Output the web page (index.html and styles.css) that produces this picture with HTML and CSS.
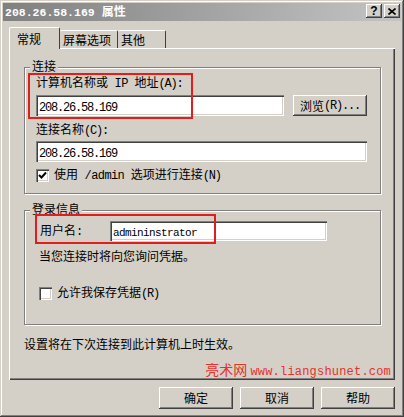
FILE: index.html
```html
<!DOCTYPE html>
<html lang="zh-CN">
<head>
    <meta charset="UTF-8">
    <title>208.26.58.169 属性</title>
    <link rel="stylesheet" href="styles.css">
</head>
<body>
    <div class="window">
        <!-- Barre de titre -->
        <div class="titlebar">
            <span class="title"><span class="en-b">208.26.58.169 </span>属性</span>
            <div class="cap-btns">
                <span class="cap-btn">?</span>
                <span class="cap-btn">
                    <svg width="8" height="7" viewBox="0 0 8 7"><path d="M0.5 0.5 L7.5 6.5 M7.5 0.5 L0.5 6.5" stroke="#000" stroke-width="1.6"/></svg>
                </span>
            </div>
        </div>

        <!-- Onglets -->
        <div class="tabs">
            <div class="tab tab-active">常规</div>
            <div class="tab tab-screen">屏幕选项</div>
            <div class="tab tab-other">其他</div>
        </div>

        <div class="panel">
            <div class="group group-conn">
                <div class="legend">连接</div>
                <div class="label">计算机名称或<span class="en sp"> IP </span>地址<span class="en">(A):</span></div>
                <div class="row">
                    <div class="field field-host"><span class="en">208.26.58.169</span></div>
                    <div class="btn btn-browse">浏览<span class="en">(R)...</span></div>
                </div>
                <div class="label label-name">连接名称<span class="en">(C):</span></div>
                <div class="field field-name"><span class="en">208.26.58.169</span></div>
                <div class="check-row check-admin">
                    <span class="checkbox">
                        <svg width="9" height="9" viewBox="0 0 9 9"><path d="M1 4 L3.5 6.5 L8 1.5" fill="none" stroke="#000" stroke-width="2"/></svg>
                    </span>
                    <span>使用<span class="en sp"> /admin </span>选项进行连接<span class="en">(N)</span></span>
                </div>
            </div>

            <div class="group group-login">
                <div class="legend">登录信息</div>
                <div class="user-row">
                    <span class="user-label">用户名<span class="en">:</span></span>
                    <div class="field field-user"><span class="en en-small">admininstrator</span></div>
                </div>
                <div class="hint">当您连接时将向您询问凭据。</div>
                <div class="check-row check-save">
                    <span class="checkbox"></span>
                    <span>允许我保存凭据<span class="en">(R)</span></span>
                </div>
            </div>

            <div class="note">设置将在下次连接到此计算机上时生效。</div>

            <div class="watermark">亮术网 <span class="wm-url">www.liangshunet.com</span></div>
        </div>

        <!-- Boutons -->
        <div class="actions">
            <div class="btn btn-action">确定</div>
            <div class="btn btn-action">取消</div>
            <div class="btn btn-action">帮助</div>
        </div>

        <!-- Cadres rouges d'annotation -->
        <div class="mark mark-host"></div>
        <div class="mark mark-user"></div>
    </div>
</body>
</html>
```

FILE: styles.css
```css
:root {
    --face: #d4d0c8;
    --shadow: #808080;
    --dark: #404040;
    --light: #ffffff;
    --red: #e01e1e;
}

body {
    margin: 0;
    font-family: "Noto Sans CJK SC", sans-serif;
    font-size: 12px;
    line-height: 14px;
    color: #000;
}

.en {
    font-family: "Liberation Mono", monospace;
    font-size: 12px;
    letter-spacing: -1.2px;
}

.sp {
    white-space: pre;
    letter-spacing: -0.6px;
}

.en-b {
    font-family: "Liberation Mono", monospace;
    font-size: 11.5px;
    font-weight: bold;
    white-space: pre;
}

.en-small {
    font-size: 11px;
    letter-spacing: -0.6px;
}

.window {
    position: relative;
    width: 404px;
    height: 417px;
    box-sizing: border-box;
    padding: 3px;
    background: var(--face);
    box-shadow: inset -1px -1px var(--dark), inset 1px 1px var(--face),
                inset -2px -2px var(--shadow), inset 2px 2px var(--light);
}

/* Barre de titre */
.titlebar {
    height: 18px;
    display: flex;
    align-items: center;
    justify-content: space-between;
    padding: 0 1px 2px 2px;
    box-sizing: border-box;
    background: linear-gradient(to right, #808080, #c4c4c4);
}

.title {
    color: #fff;
    font-weight: bold;
    padding-top: 2px;
}

.cap-btns {
    display: flex;
    gap: 2px;
}

.cap-btn {
    width: 16px;
    height: 14px;
    display: flex;
    align-items: center;
    justify-content: center;
    background: var(--face);
    font-family: "Liberation Sans", sans-serif;
    font-weight: bold;
    font-size: 12px;
    box-shadow: inset -1px -1px var(--dark), inset 1px 1px var(--light),
                inset -2px -2px var(--shadow);
}

/* Onglets */
.tabs {
    display: flex;
    align-items: flex-end;
    height: 22px;
    margin: 6px 0 -1px 6px;
    position: relative;
    z-index: 1;
}

.tab {
    height: 18px;
    margin-bottom: 1px;
    box-sizing: border-box;
    padding: 2px 0 0 3px;
    background: var(--face);
    border-top: 1px solid var(--light);
    border-left: 1px solid var(--light);
    border-right: 1px solid var(--dark);
    border-radius: 2px 2px 0 0;
}

.tab-active {
    width: 51px;
    height: 22px;
    margin-bottom: 0;
    padding: 4px 0 0 7px;
}

.tab-screen {
    width: 58px;
    border-left: none;
}

.tab-other {
    width: 48px;
    border-left: none;
}

/* Panneau */
.panel {
    position: relative;
    width: 386px;
    height: 332px;
    margin-left: 6px;
    box-sizing: border-box;
    padding: 19px 0 0 15px;
    box-shadow: inset 1px 1px var(--light), inset -1px -1px var(--dark),
                inset -2px -2px var(--shadow);
}

.group {
    position: relative;
    width: 357px;
    box-sizing: border-box;
    border: 1px solid var(--shadow);
    box-shadow: inset 1px 1px var(--light), 1px 1px var(--light);
}

.legend {
    position: absolute;
    top: -9px;
    left: 5px;
    padding: 0 2px;
    background: var(--face);
}

.group-conn {
    padding: 7px 0 11px 11px;
}

.group-login {
    margin-top: 16px;
    padding: 10px 0 24px 14px;
}

.row {
    display: flex;
    gap: 9px;
    margin-top: 4px;
}

.label-name {
    margin-top: 6px;
}

.field {
    height: 21px;
    box-sizing: border-box;
    padding: 4px 0 0 3px;
    background: #fff;
    box-shadow: inset 1px 1px var(--shadow), inset 2px 2px var(--dark),
                inset -1px -1px var(--light), inset -2px -2px var(--face);
}

.field-host {
    width: 248px;
}

.field-name {
    width: 331px;
    margin-top: 3px;
}

.btn {
    display: flex;
    align-items: center;
    justify-content: center;
    box-sizing: border-box;
    background: var(--face);
    box-shadow: inset -1px -1px var(--dark), inset 1px 1px var(--light),
                inset -2px -2px var(--shadow);
}

.btn-browse {
    width: 74px;
    height: 21px;
}

.check-row {
    display: flex;
    align-items: center;
    gap: 5px;
    height: 14px;
}

.check-admin {
    margin-top: 6px;
}

.check-save {
    margin-top: 23px;
}

.checkbox {
    width: 13px;
    height: 13px;
    display: flex;
    align-items: center;
    justify-content: center;
    background: #fff;
    box-shadow: inset 1px 1px var(--shadow), inset 2px 2px var(--dark),
                inset -1px -1px var(--light), inset -2px -2px var(--face);
}

.user-row {
    display: flex;
    align-items: center;
    height: 20px;
}

.user-label {
    width: 70px;
    padding-left: 1px;
}

.field-user {
    width: 217px;
    height: 20px;
    padding-top: 3px;
}

.hint {
    margin-top: 8px;
}

.note {
    margin: 12px 0 0 0;
}

.watermark {
    position: absolute;
    right: 4px;
    bottom: -1px;
    color: #e8302c;
    font-size: 14px;
    line-height: 18px;
}

.wm-url {
    font-family: "Liberation Mono", monospace;
    font-size: 12px;
    letter-spacing: 0.2px;
}

/* Boutons du bas */
.actions {
    display: flex;
    justify-content: flex-end;
    gap: 7px;
    margin-top: 7px;
    padding-right: 6px;
}

.btn-action {
    width: 74px;
    height: 22px;
}

/* Cadres rouges */
.mark {
    position: absolute;
    border: 2px solid var(--red);
    box-sizing: border-box;
}

.mark-host {
    left: 28px;
    top: 73px;
    width: 165px;
    height: 46px;
}

.mark-user {
    left: 35px;
    top: 214px;
    width: 181px;
    height: 30px;
}
```
